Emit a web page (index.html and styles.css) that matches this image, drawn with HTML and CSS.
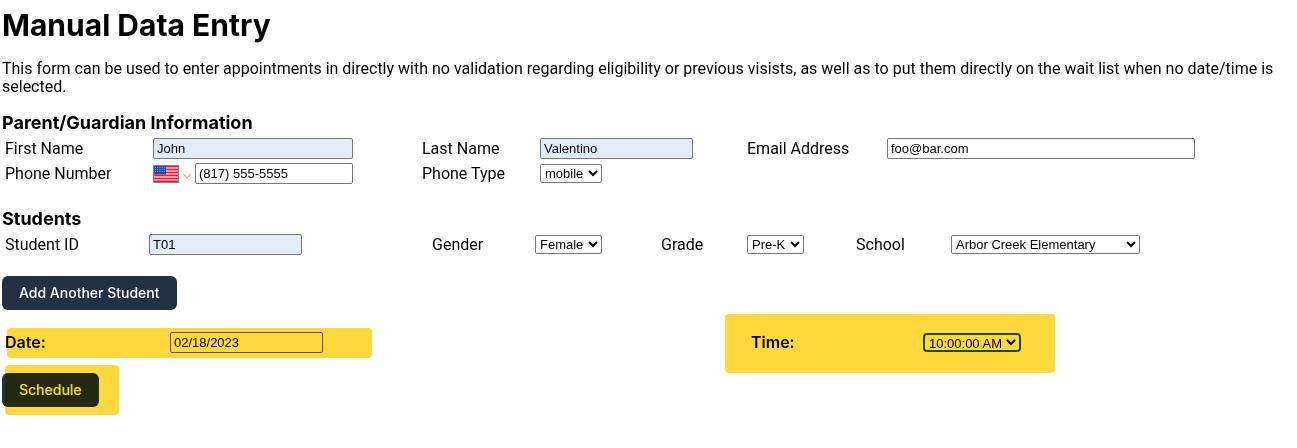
FILE: index.html
```html
<!DOCTYPE html>
<html lang="en">
<head>
<meta charset="utf-8">
<title>Manual Data Entry</title>
<link rel="stylesheet" href="styles.css">
</head>
<body>
<main>
<h1>Manual Data Entry</h1>
<p class="intro">This form can be used to enter appointments in directly with no validation regarding eligibility or previous visists, as well as to put them directly on the wait list when no date/time is selected.</p>
<form>
<h2>Parent/Guardian Information</h2>
<div class="grid guardian">
  <label for="first">First Name</label>
  <input class="field filled wide" id="first" type="text" value="John">
  <label for="last">Last Name</label>
  <input class="field filled" id="last" type="text" value="Valentino">
  <label for="email">Email Address</label>
  <input class="field email" id="email" type="email" value="foo@bar.com">
  <label for="phone">Phone Number</label>
  <div class="phone">
    <svg class="flag" viewBox="0 0 26 18" aria-hidden="true">
      <rect width="26" height="18" fill="#fbc9d2"/>
      <path d="M1 1.5h24M1 4.5h24M1 7.5h24M1 10.5h24M1 13.5h24M1 16.3h24" stroke="#f01432" stroke-width="1.5"/>
      <rect x="1" y="1" width="12" height="8.5" fill="#2549a5"/>
      <path d="M2 2.5h10M2 4.5h10M2 6.5h10" stroke="#9fb4e4" stroke-width=".8" stroke-dasharray="1 1.2"/>
      <rect x=".5" y=".5" width="25" height="17" fill="none" stroke="#8a7f87"/>
    </svg>
    <svg class="chevron" viewBox="0 0 8 6" aria-hidden="true"><path d="M.5 1 4 4.8 7.5 1" fill="none" stroke="#999"/></svg>
    <input class="field" id="phone" type="tel" value="(817) 555-5555">
  </div>
  <label for="type">Phone Type</label>
  <select class="pick type" id="type"><option>mobile</option></select>
</div>
<h2 class="students-title">Students</h2>
<div class="grid students">
  <label for="sid">Student ID</label>
  <input class="field filled" id="sid" type="text" value="T01">
  <label for="gender">Gender</label>
  <select class="pick gender" id="gender"><option>Female</option></select>
  <label for="grade">Grade</label>
  <select class="pick grade" id="grade"><option>Pre-K</option></select>
  <label for="school">School</label>
  <select class="pick school" id="school"><option>Arbor Creek Elementary</option></select>
</div>
<button class="btn" type="button">Add Another Student</button>
<div class="grid visit">
  <span class="mark mark-date"></span>
  <span class="mark mark-time"></span>
  <label for="date">Date:</label>
  <input class="field" id="date" type="text" value="02/18/2023">
  <label for="time">Time:</label>
  <select class="pick time" id="time"><option>10:00:00 AM</option></select>
</div>
<div class="submit">
  <button class="btn" type="submit">Schedule</button>
  <span class="mark mark-submit"></span>
</div>
</form>
</main>
</body>
</html>
```
FILE: styles.css
```css
* { box-sizing: border-box; }
body {
  margin: 0;
  background: #fff;
  color: #000;
  font: 16px/18px Roboto, "Liberation Sans", sans-serif;
}
main { padding: 6px 2px 30px; }
h1, h2, .visit { font-family: Inter, "Liberation Sans", sans-serif; }
h1 { margin: 0 0 16px; font-size: 30px; line-height: 38px; }
.intro { margin: 0 -2px 0 0; }
h2 { margin: 16px 0 2px; font-size: 18px; line-height: 22px; }
.students-title { margin-top: 22px; }

.grid {
  display: grid;
  grid-auto-rows: 25px;
  align-items: center;
  padding-left: 3px;
}
.guardian { grid-template-columns: 148fr 269fr 118fr 207fr 140fr 408fr; }
.students { grid-template-columns: 144fr 283fr 103fr 126fr 86fr 109fr 95fr 344fr; margin-bottom: 19px; }
.visit {
  grid-template-columns: 165fr 581fr 172fr 372fr;
  grid-auto-rows: 28px;
  position: relative;
  margin: 18px 0 17px;
  font-weight: 600;
}

.field, .pick {
  border: 1px solid #767676;
  border-radius: 2px;
  background: #fff;
  color: #000;
  font: 13px/15px "Liberation Sans", Arial, sans-serif;
}
.field { width: 153px; height: 21px; padding: 1px 3px; }
.filled { background: #e2edfc; }
.wide { width: 200px; }
.email { width: 308px; }
.phone { display: flex; align-items: center; width: 200px; }
.phone .field { flex: 1; min-width: 0; }
.flag { width: 26px; height: 18px; }
.chevron { width: 8px; height: 6px; margin: 4px 4px 0; }

.pick {
  height: 19px;
  padding: 0;
  justify-self: start;
}
.type { width: 62px; }
.gender { width: 67px; }
.grade { width: 57px; }
.school { width: 189px; }
.time { width: 98px; border: 2px solid #184b16; border-radius: 4px; }
.visit .field, .visit .pick { background: transparent; }
.visit .field { border-color: #5f5215; }
.visit label, .visit .field, .visit .pick { position: relative; }

.btn {
  display: block;
  height: 34px;
  padding: 0 17px;
  border: 0;
  border-radius: 6px;
  background: #233147;
  color: #fff;
  font: 500 14px/20px Inter, sans-serif;
}
.submit { position: relative; }

/* Highlighter strokes laid over the form */
.mark {
  position: absolute;
  border-radius: 4px;
  background: #ffd83b;
  mix-blend-mode: multiply;
  pointer-events: none;
}
.mark-date { top: 0; left: 5px; width: 365px; height: 30px; }
.mark-time { top: -14px; left: 723px; width: 330px; height: 59px; }
.mark-submit { top: -8px; left: 3px; width: 114px; height: 50px; }
```
